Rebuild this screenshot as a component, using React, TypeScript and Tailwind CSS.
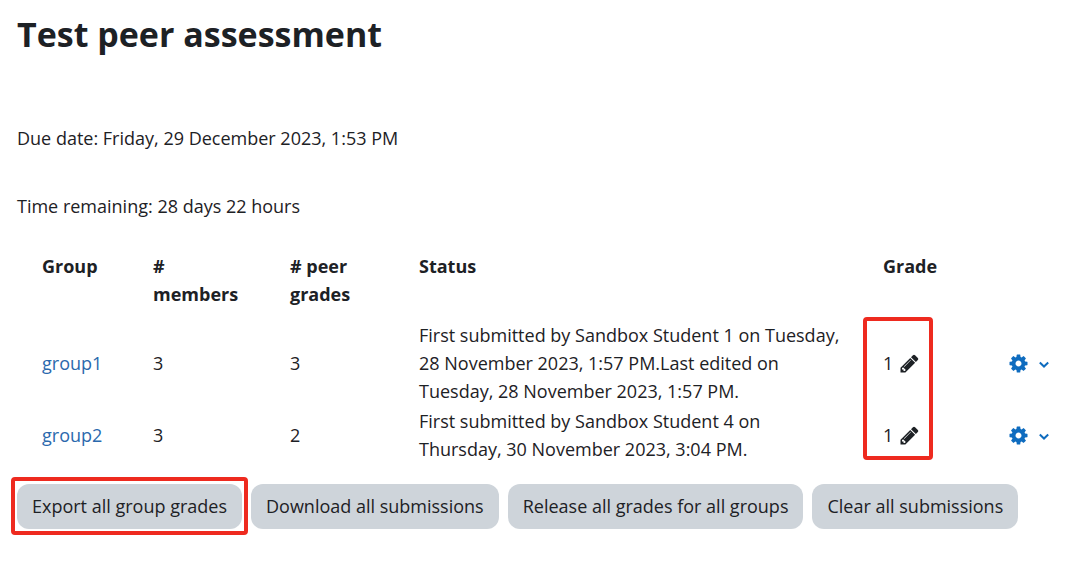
import React from "react";

type Row = { group: string; members: number; peerGrades: number; status: string; grade: number };

const rows: Row[] = [
  {
    group: "group1",
    members: 3,
    peerGrades: 3,
    status:
      "First submitted by Sandbox Student 1 on Tuesday, 28 November 2023, 1:57 PM.Last edited on Tuesday, 28 November 2023, 1:57 PM.",
    grade: 1,
  },
  {
    group: "group2",
    members: 3,
    peerGrades: 2,
    status: "First submitted by Sandbox Student 4 on Thursday, 30 November 2023, 3:04 PM.",
    grade: 1,
  },
];

function PencilIcon() {
  return (
    <svg viewBox="0 0 1792 1792" className="size-[21px]" fill="currentColor" aria-hidden="true">
      <path d="M491 1536l91-91-235-235-91 91v107h128v128h107zm523-928q0-22-22-22-10 0-17 7l-542 542q-7 7-7 17 0 22 22 22 10 0 17-7l542-542q7-7 7-17zm-54-192l416 416-832 832h-416v-416zm683 96q0 53-37 90l-166 166-416-416 166-165q36-38 90-38 53 0 91 38l235 234q37 39 37 91z" />
    </svg>
  );
}

function CogIcon() {
  return (
    <svg viewBox="0 0 1792 1792" className="size-[21px]" fill="currentColor" aria-hidden="true">
      <path d="M1152 896q0-106-75-181t-181-75-181 75-75 181 75 181 181 75 181-75 75-181zm512-109v222q0 12-8 23t-20 13l-185 28q-19 54-39 91 35 50 107 138 10 12 10 25t-9 23q-27 37-99 108t-94 71q-12 0-26-9l-138-108q-44 23-91 38-16 136-29 186-7 28-36 28h-222q-14 0-24.5-8.5t-11.5-21.5l-28-184q-49-16-90-37l-141 107q-10 9-25 9-14 0-25-11-126-114-165-168-7-10-7-23 0-12 8-23 15-21 51-66.5t54-70.5q-27-50-41-99l-183-27q-13-2-21-12.5t-8-23.5v-222q0-12 8-23t19-13l186-28q14-46 39-92-40-57-107-138-10-12-10-24 0-10 9-23 26-36 98.5-107.5t94.5-71.5q13 0 26 10l138 107q44-23 91-38 16-136 29-186 7-28 36-28h222q14 0 24.5 8.5t11.5 21.5l28 184q49 16 90 37l142-107q9-9 24-9 13 0 25 10 129 119 165 170 7 8 7 22 0 12-8 23-15 21-51 66.5t-54 70.5q26 50 41 98l183 28q13 2 21 12.5t8 23.5z" />
    </svg>
  );
}

function ChevronIcon() {
  return (
    <svg viewBox="0 0 10 8" className="mt-1 h-2 w-2.5" fill="none" stroke="currentColor" strokeWidth="2" aria-hidden="true">
      <path d="M0.8 1.5L5 5.5L9.2 1.5" />
    </svg>
  );
}

function ActionButton({ children }: { children: React.ReactNode }) {
  return (
    <button type="button" className="rounded-xl bg-[#ced4da] px-[15px] py-2 leading-[29px] whitespace-nowrap">
      {children}
    </button>
  );
}

export default function App() {
  return (
    <main className="bg-white pt-2 pr-4 pb-8 pl-[17px] font-['Open_Sans','Noto_Sans',sans-serif] text-lg leading-7 text-[#1d2125]">
      <h1 className="text-[34px] leading-[52px] font-bold">Test peer assessment</h1>
      <p className="mt-16">Due date: Friday, 29 December 2023, 1:53 PM</p>
      <p className="mt-10">Time remaining: 28 days 22 hours</p>

      <div className="relative mt-5">
        <table className="w-full table-fixed text-left">
          <colgroup>
            <col className="w-[111px]" />
            <col className="w-[137px]" />
            <col className="w-[129px]" />
            <col />
            <col className="w-[127px]" />
            <col className="w-[91px]" />
          </colgroup>
          <thead>
            <tr className="align-top font-bold">
              <th scope="col" className="pt-3 pb-3 pl-[25px]">Group</th>
              <th scope="col" className="pt-3 pr-6 pb-3 pl-[25px]"># members</th>
              <th scope="col" className="pt-3 pr-6 pb-3 pl-[25px]"># peer grades</th>
              <th scope="col" className="pt-3 pb-3 pl-[25px]">Status</th>
              <th scope="col" className="pt-3 pb-3 pl-[25px]">Grade</th>
              <td />
            </tr>
          </thead>
          <tbody>
            {rows.map((row) => (
              <tr key={row.group}>
                <td className="py-px pl-[25px]">
                  <a href="#" className="text-[#2a69ad]">{row.group}</a>
                </td>
                <td className="py-px pl-[25px]">{row.members}</td>
                <td className="py-px pl-[25px]">{row.peerGrades}</td>
                <td className="py-px pr-4 pl-[25px]">{row.status}</td>
                <td className="py-px pl-[25px]">
                  <div className="flex items-center gap-1.5">
                    {row.grade}
                    <a href="#" aria-label={"Edit grade of " + row.group}>
                      <PencilIcon />
                    </a>
                  </div>
                </td>
                <td className="py-px pl-[23px]">
                  <button type="button" aria-label={"Actions for " + row.group} className="flex items-center gap-2.5 text-[#0f6cbf]">
                    <CogIcon />
                    <ChevronIcon />
                  </button>
                </td>
              </tr>
            ))}
          </tbody>
        </table>
        <div className="pointer-events-none absolute top-[77px] right-[143px] h-[143px] w-[70px] rounded-sm border-4 border-[#ee2a1f]" />
      </div>

      <div className="mt-5 flex flex-wrap gap-[9px]">
        <div className="relative flex">
          <ActionButton>Export all group grades</ActionButton>
          <div className="pointer-events-none absolute -inset-x-1.5 -top-[7px] -bottom-1.5 rounded-sm border-4 border-[#ee2a1f]" />
        </div>
        <ActionButton>Download all submissions</ActionButton>
        <ActionButton>Release all grades for all groups</ActionButton>
        <ActionButton>Clear all submissions</ActionButton>
      </div>
    </main>
  );
}
